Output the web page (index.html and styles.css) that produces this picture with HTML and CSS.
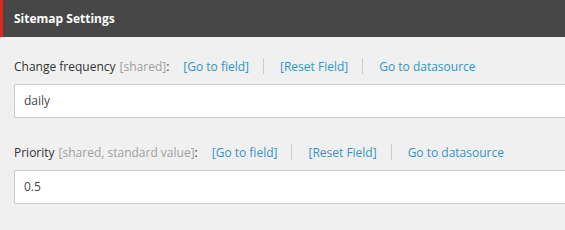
FILE: index.html
```html
<!DOCTYPE html>
<html>
<head>
<meta charset="utf-8">
<link rel="stylesheet" href="styles.css">
</head>
<body>
<div class="section">
  <div class="section-header">Sitemap Settings</div>
  <div class="section-body">
    <div class="field">
      <div class="field-label">
        <span class="label-name">Change frequency</span>
        <span class="label-meta">[shared]</span><span class="label-name">:</span>
        <a class="field-link first">[Go to field]</a>
        <span class="sep"></span>
        <a class="field-link">[Reset Field]</a>
        <span class="sep"></span>
        <a class="field-link">Go to datasource</a>
      </div>
      <div class="field-input">daily</div>
    </div>
    <div class="field">
      <div class="field-label">
        <span class="label-name">Priority</span>
        <span class="label-meta">[shared, standard value]</span><span class="label-name">:</span>
        <a class="field-link first">[Go to field]</a>
        <span class="sep"></span>
        <a class="field-link">[Reset Field]</a>
        <span class="sep"></span>
        <a class="field-link">Go to datasource</a>
      </div>
      <div class="field-input">0.5</div>
    </div>
  </div>
</div>
</body>
</html>
```
FILE: styles.css
```css
html, body {
  margin: 0;
  padding: 0;
  background: #f0f0f0;
  overflow: hidden;
  font-family: "Open Sans", "Liberation Sans", sans-serif;
}
.section-header {
  height: 37px;
  line-height: 37px;
  background: #474747;
  border-left: 3px solid #dc291e;
  padding-left: 11px;
  color: #ffffff;
  font-weight: bold;
  font-size: 12px;
}
.section-body {
  padding: 20px 0 0 14px;
}
.field {
  margin-bottom: 25px;
}
.field-label {
  display: flex;
  align-items: center;
  height: 18px;
  font-size: 12px;
  color: #333333;
  white-space: nowrap;
}
.label-meta {
  color: #a0a0a0;
  margin-left: 4px;
}
.field-link {
  color: #2f95c7;
  cursor: pointer;
}
.field-link.first {
  margin-left: 14px;
}
.sep {
  width: 1px;
  height: 16px;
  background: #cccccc;
  margin: 0 16px 0 14px;
}
.field-input {
  margin-top: 9px;
  margin-right: -20px;
  height: 32px;
  line-height: 32px;
  background: #ffffff;
  border: 1px solid #cccccc;
  border-radius: 2px;
  padding-left: 9px;
  font-size: 12px;
  color: #474747;
}
```
